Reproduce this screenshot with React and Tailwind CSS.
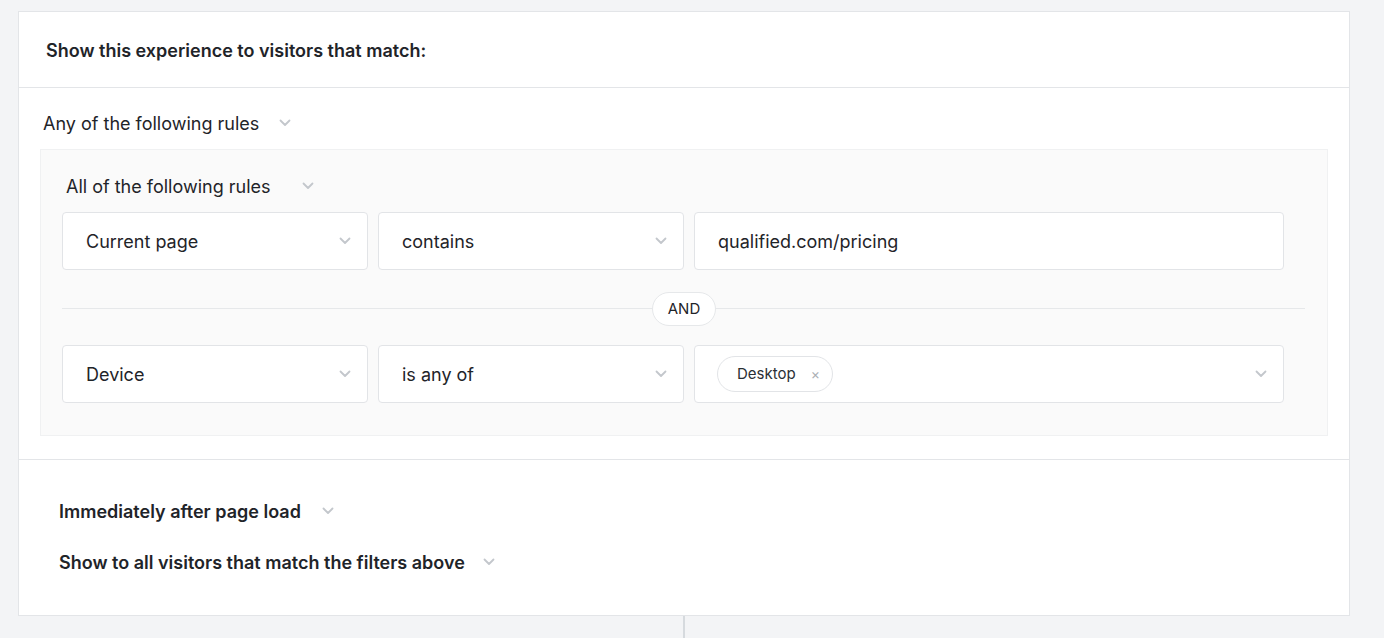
import React from 'react';

function Chevron({ className = '' }) {
  return (
    <svg viewBox="0 0 12 8" className={`w-[12px] h-[8px] ${className}`} fill="none">
      <polyline points="1.5,1.5 6,6 10.5,1.5" stroke="#c3c7cc" strokeWidth="1.8" strokeLinecap="round" strokeLinejoin="round" />
    </svg>
  );
}

function Select({ value, className = '' }) {
  return (
    <div className={`h-[58px] bg-white border border-[#e2e4e7] rounded-[4px] flex items-center justify-between pl-[23px] pr-[16px] ${className}`}>
      <span className="text-[18px] text-[#1f2429]">{value}</span>
      <Chevron />
    </div>
  );
}

function RuleLabel({ label, bold = false, gap = 'gap-[20px]' }) {
  return (
    <div className={`h-[24px] flex items-center ${gap}`}>
      <span className={`text-[18px] text-[#1f2429] ${bold ? 'font-semibold' : ''}`}>{label}</span>
      <Chevron />
    </div>
  );
}

export default function App() {
  return (
    <div className="min-h-screen bg-[#f3f4f6] pt-[11px] font-['Inter',sans-serif]">
      <div className="ml-[18px] w-[1332px]">
        <div className="bg-white border border-[#e3e5e8]">
          {/* Header */}
          <div className="h-[76px] flex items-center px-[27px] pt-[2px] border-b border-[#e3e5e8]">
            <h2 className="text-[18px] font-semibold text-[#1f2429]">Show this experience to visitors that match:</h2>
          </div>

          {/* Rules */}
          <div className="px-[21px] pt-[23px] pb-[23px] border-b border-[#e3e5e8]">
            <div className="pl-[3px]">
              <RuleLabel label="Any of the following rules" />
            </div>
            <div className="mt-[14px] bg-[#fafafa] border border-[#f0f1f2] pl-[21px] pr-[22px] pt-[24px] pb-[32px]">
              <div className="pl-[4px]">
                <RuleLabel label="All of the following rules" gap="gap-[31px]" />
              </div>
              <div className="mt-[14px] flex gap-[10px] mr-[21px]">
                <Select value="Current page" className="w-[306px]" />
                <Select value="contains" className="w-[306px]" />
                <div className="flex-1 h-[58px] bg-white border border-[#e2e4e7] rounded-[4px] flex items-center pl-[23px]">
                  <span className="text-[18px] text-[#1f2429]">qualified.com/pricing</span>
                </div>
              </div>

              <div className="relative h-[75px] flex items-center">
                <div className="w-full h-px bg-[#e6e8ea] mt-[2px]" />
                <div className="absolute left-[590px] top-[22px] h-[34px] w-[64px] rounded-full bg-white border border-[#e6e8ea] flex items-center justify-center text-[15px] text-[#1f2429]">
                  AND
                </div>
              </div>

              <div className="flex gap-[10px] mr-[21px]">
                <Select value="Device" className="w-[306px]" />
                <Select value="is any of" className="w-[306px]" />
                <div className="flex-1 h-[58px] bg-white border border-[#e2e4e7] rounded-[4px] flex items-center justify-between pl-[22px] pr-[16px]">
                  <span className="h-[36px] rounded-full border border-[#e2e4e7] bg-white flex items-center pl-[19px] pr-[12px] gap-[15px]">
                    <span className="text-[15px] text-[#2a2f35]">Desktop</span>
                    <span className="text-[14px] text-[#a9aeb4] leading-none">×</span>
                  </span>
                  <Chevron />
                </div>
              </div>
            </div>
          </div>

          {/* Timing / audience */}
          <div className="pl-[40px] pt-[39px] pb-[41px] flex flex-col gap-[27px]">
            <RuleLabel label="Immediately after page load" bold gap="gap-[21px]" />
            <RuleLabel label="Show to all visitors that match the filters above" bold gap="gap-[18px]" />
          </div>
        </div>
        <div className="mx-auto w-[2px] h-[23px] bg-[#d6dade]" />
      </div>
    </div>
  );
}
